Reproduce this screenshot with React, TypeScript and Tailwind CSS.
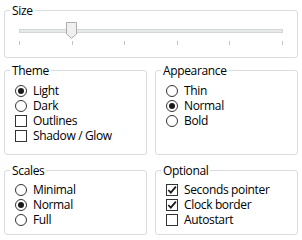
import React from "react";

const font = { fontFamily: '"Open Sans", "Liberation Sans", sans-serif' };

const Radio: React.FC<{ label: string; checked?: boolean }> = ({ label, checked }) => (
  <div className="flex items-center h-[15px] gap-[6px]">
    <span className="w-[12px] h-[12px] rounded-full border border-[#333333] bg-white flex items-center justify-center">
      {checked && <span className="w-[6px] h-[6px] rounded-full bg-[#1a1a1a]" />}
    </span>
    <span className="text-[12px] leading-[15px] tracking-[-0.35px] text-black">{label}</span>
  </div>
);

const Check: React.FC<{ label: string; checked?: boolean }> = ({ label, checked }) => (
  <div className="flex items-center h-[15px] gap-[6px]">
    <span className="w-[12px] h-[12px] border border-[#333333] bg-white flex items-center justify-center">
      {checked && (
        <svg width="10" height="10" viewBox="0 0 10 10">
          <path d="M1.3 5 L3.8 7.6 L8.9 1.6" fill="none" stroke="#1a1a1a" strokeWidth="1.8" />
        </svg>
      )}
    </span>
    <span className="text-[12px] leading-[15px] tracking-[-0.35px] text-black">{label}</span>
  </div>
);

const Group: React.FC<{ title: string; className?: string; children: React.ReactNode }> = ({
  title,
  className = "",
  children,
}) => (
  <fieldset className={`border border-[#d9dcde] rounded-[3px] pl-[5px] pr-[5px] ${className}`}>
    <legend className="px-[2px] text-[12px] leading-[15px] tracking-[-0.35px] text-black">{title}</legend>
    {children}
  </fieldset>
);

export default function App() {
  const ticks = [0, 1, 2, 3, 4, 5];
  return (
    <div className="w-[302px] h-[240px] bg-white px-[4px] pt-[3px] flex flex-col" style={font}>
      <Group title="Size" className="h-[55px]">
        <div className="relative mx-[9px] h-[30px]">
          <div className="absolute left-0 right-0 top-[11px] h-[4px] bg-[#e7eaea] border border-[#d6d6d6]" />
          <svg className="absolute left-[47px] top-[4px]" width="11" height="17" viewBox="0 0 11 17">
            <path d="M0.5 0.5 H10.5 V12 L5.5 16.3 L0.5 12 Z" fill="#f0f0f0" stroke="#acacac" />
          </svg>
          <div className="absolute left-0 right-0 top-[23px] flex justify-between">
            {ticks.map((t) => (
              <span key={t} className="w-[1px] h-[4px] bg-[#c4c4c4]" />
            ))}
          </div>
        </div>
      </Group>

      <div className="grid grid-cols-2 gap-[8px] mt-[5px]">
        <Group title="Theme" className="h-[92px]">
          <div className="pl-[5px] pt-[5px]">
            <Radio label="Light" checked />
            <Radio label="Dark" />
            <Check label="Outlines" />
            <Check label="Shadow / Glow" />
          </div>
        </Group>
        <Group title="Appearance" className="h-[92px]">
          <div className="pl-[5px] pt-[5px]">
            <Radio label="Thin" />
            <Radio label="Normal" checked />
            <Radio label="Bold" />
          </div>
        </Group>
      </div>

      <div className="grid grid-cols-2 gap-[8px] mt-[8px]">
        <Group title="Scales" className="h-[72px]">
          <div className="pl-[5px] pt-[4px]">
            <Radio label="Minimal" />
            <Radio label="Normal" checked />
            <Radio label="Full" />
          </div>
        </Group>
        <Group title="Optional" className="h-[72px]">
          <div className="pl-[5px] pt-[4px]">
            <Check label="Seconds pointer" checked />
            <Check label="Clock border" checked />
            <Check label="Autostart" />
          </div>
        </Group>
      </div>
    </div>
  );
}
